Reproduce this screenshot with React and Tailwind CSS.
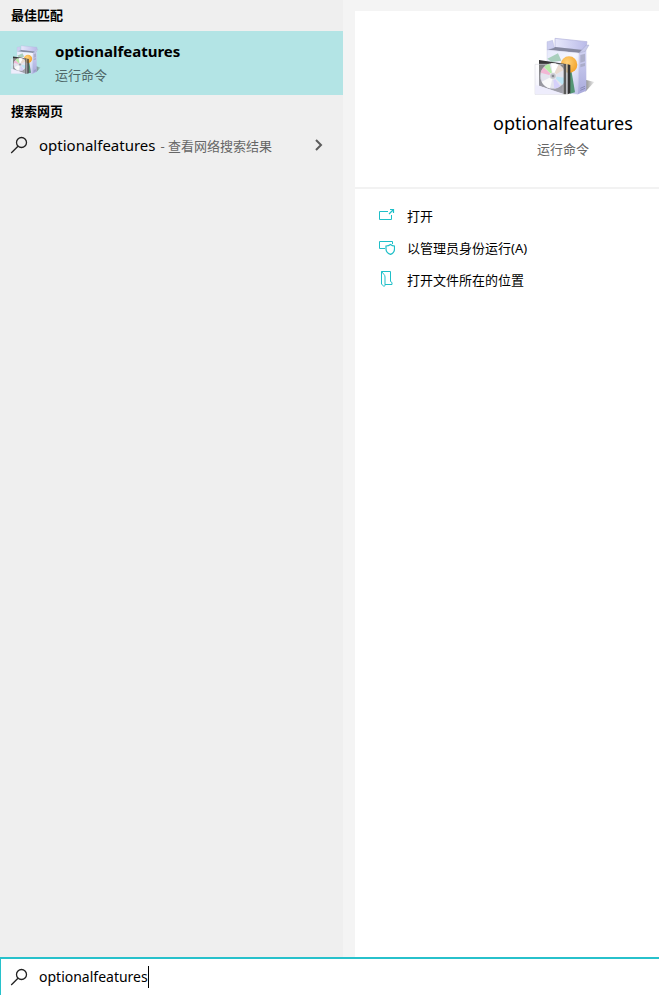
import { useState } from 'react'

const ACTIONS = [
  { label: '打开', Icon: OpenIcon },
  { label: '以管理员身份运行(A)', Icon: AdminIcon },
  { label: '打开文件所在的位置', Icon: LocationIcon },
]

function SearchIcon() {
  return (
    <svg className="size-5 shrink-0" viewBox="0 0 20 20" fill="none" stroke="#222" strokeWidth="1.3" aria-hidden="true">
      <circle cx="11.500" cy="7.500" r="5" />
      <path d="M8 11.200 1.200 18" />
    </svg>
  )
}

function OpenIcon() {
  return (
    <svg className="size-4" viewBox="0 0 16 16" fill="none" stroke="#1fbfc8" aria-hidden="true">
      <path d="M9 4.500H.5v8h12V8" />
      <path d="M10 7 14 3M11 2.500H14.500V6" strokeWidth="1.200" />
    </svg>
  )
}

function AdminIcon() {
  return (
    <svg className="size-4" viewBox="0 0 16 16" fill="none" stroke="#1fbfc8" aria-hidden="true">
      <path d="M6 9.500H.5v-7h13V5" />
      <path
        d="M11.500 5.500c1.200 1 2.500 1.500 4 1.500v3c0 2.500-1.600 4.400-4 5.400-2.800-1-4.500-2.900-4.500-5.400V7c1.600 0 3.300-.5 4.500-1.500Z"
        strokeWidth="1.200"
      />
    </svg>
  )
}

function LocationIcon() {
  return (
    <svg className="size-4" viewBox="0 0 16 16" fill="none" stroke="#1fbfc8" aria-hidden="true">
      <path d="M2.500.5h9v10l1.500 1v2H6" />
      <path d="M2.500.5v12.500l2.500 2.500q1-.5 1-2V6q0-1.500-1-2.500Z" />
    </svg>
  )
}

// Software box with a CD case in front of it
function AppIcon({ className }) {
  return (
    <svg className={className} viewBox="33 30 192 192" aria-hidden="true">
      <defs>
        <linearGradient id="front" x1="0" y1="0" x2="1" y2="1">
          <stop offset="0" stopColor="#e6e9fb" />
          <stop offset=".5" stopColor="#f6f7ff" />
          <stop offset="1" stopColor="#bfc2ea" />
        </linearGradient>
        <linearGradient id="side" x1="0" y1="0" x2="0" y2="1">
          <stop offset="0" stopColor="#d0d2f3" />
          <stop offset="1" stopColor="#a9aadb" />
        </linearGradient>
        <linearGradient id="lid" x1="0" y1="0" x2="1" y2="0">
          <stop offset="0" stopColor="#e7e8fb" />
          <stop offset="1" stopColor="#b9bae8" />
        </linearGradient>
        <linearGradient id="tray" x1="0" y1="0" x2="0" y2="1">
          <stop offset="0" stopColor="#303030" />
          <stop offset="1" stopColor="#8a8a8a" />
        </linearGradient>
        <linearGradient id="cover" x1="0" y1="0" x2="0" y2="1">
          <stop offset="0" stopColor="#fff" stopOpacity=".35" />
          <stop offset="1" stopColor="#d6d5f6" stopOpacity=".35" />
        </linearGradient>
        <linearGradient id="shadow" x1="0" y1="0" x2="1" y2="0">
          <stop offset="0" stopColor="#555" stopOpacity=".65" />
          <stop offset="1" stopColor="#555" stopOpacity=".1" />
        </linearGradient>
        <radialGradient id="orb" cx=".4" cy=".35" r=".7">
          <stop offset="0" stopColor="#ffd27a" />
          <stop offset="1" stopColor="#f3a126" />
        </radialGradient>
      </defs>
      <path d="M196 164 223 171 196 200Z" fill="url(#shadow)" />
      <path d="M105 40 201 50 196 76 105 68Z" fill="url(#lid)" stroke="#b0b1da" strokeWidth="2" />
      <path d="M81 74 105 66 196 76 177 84Z" fill="#85889f" />
      <path d="M81 50 98 46 103 68 81 75Z" fill="#cdcff0" stroke="#abadd6" />
      <path d="M81 75 177 84 174 208 81 196Z" fill="url(#front)" stroke="#c3c5e4" />
      <path d="M177 84 199 76 199 197 174 208Z" fill="url(#side)" />
      <path d="M199 60 207 60 196 79 177 84Z" fill="#c7c9ea" stroke="#9597bd" />
      <path d="M82 101 114 85 124 107 95 111Z" fill="#a9cfbd" />
      <path d="M148 118 152 124 165 202 150 206Z" fill="#549675" />
      <circle cx="147" cy="119" r="25" fill="url(#orb)" />
      <path d="M181 90 195 86V109L181 113ZM181 118 195 114V123L181 127Z" fill="#a1a4bd" opacity=".75" />
      <path d="M181 190 195 184M181 196 195 190" stroke="#7779a1" strokeWidth="2" />
      {/* CD case: tray, clear cover, disc, spine */}
      <path d="M57 105 132 116 132 207 57 182Z" fill="url(#tray)" />
      <path d="M45 118H130V208H45Z" fill="url(#cover)" stroke="#dcdce4" strokeWidth="2" />
      <path d="M46 180 57 182 128 207H46Z" fill="#eeedfc" />
      <circle cx="99" cy="153" r="38" fill="#e4e4ee" stroke="#c0c0ca" />
      <path d="M99 153 62 143A38 38 0 0 1 71 127Z" fill="#f2b7d4" />
      <path d="M99 153 72 126A38 38 0 0 1 88 116Z" fill="#b5eda5" />
      <path d="M99 153 93 115A38 38 0 0 1 115 119Z" fill="#fff" />
      <path d="M99 153 116 119A38 38 0 0 1 132 134Z" fill="#eadbd0" />
      <path d="M99 153 137 159A38 38 0 0 1 127 179Z" fill="#bde5f5" />
      <path d="M99 153 121 184A38 38 0 0 1 103 191Z" fill="#d5d0fa" />
      <path d="M99 153 90 190A38 38 0 0 1 65 170Z" fill="#fafafa" />
      <circle cx="99" cy="153" r="10" fill="#c4c5cc" stroke="#f5f5f5" strokeWidth="2" />
      <circle cx="99" cy="153" r="4" fill="#8b8b92" />
      <path d="M131 116 139 117V208H131Z" fill="#5a5a5a" />
      <path d="M139 117 143 118V208H139Z" fill="#c4c4c4" />
      <path d="M143 118 151 120V205L143 208Z" fill="#343434" />
    </svg>
  )
}

function SectionTitle({ children }) {
  return <h2 className="px-[11px] text-[13px] leading-8 font-bold">{children}</h2>
}

function ResultsPane() {
  return (
    <section className="w-[343px] shrink-0 bg-[#efefef]">
      <div className="-mt-px">
        <SectionTitle>最佳匹配</SectionTitle>
      </div>
      <button type="button" className="flex h-16 w-full items-start gap-[14px] bg-[#b3e4e5] px-[9px] text-left">
        <AppIcon className="mt-[13px] size-8" />
        <span className="flex flex-col pt-[10px]">
          <span className="text-[15px] leading-5 font-bold">optionalfeatures</span>
          <span className="pt-1 text-[13px] leading-5 text-[#4f6768]">运行命令</span>
        </span>
      </button>
      <SectionTitle>搜索网页</SectionTitle>
      <button type="button" className="flex h-9 w-full items-center gap-[9px] pr-[18px] pl-[10px] text-left">
        <SearchIcon />
        <span className="flex flex-1 items-baseline gap-[5px] text-[13px] text-[#666]">
          <span className="text-[15px] text-black">optionalfeatures</span>
          <span>- 查看网络搜索结果</span>
        </span>
        <svg className="h-3 w-3" viewBox="0 0 12 12" fill="none" stroke="#5c5c5c" strokeWidth="2" aria-hidden="true">
          <path d="M3 1l5 5-5 5" />
        </svg>
      </button>
    </section>
  )
}

function DetailPane() {
  return (
    <section className="min-w-[416px] flex-1 bg-white">
      <header className="flex flex-col items-center border-b-2 border-[#f2f2f2] pt-6 pb-[26px]">
        <AppIcon className="size-16" />
        <h1 className="pt-[10px] text-[18px] leading-7">optionalfeatures</h1>
        <p className="text-[13px] leading-6 text-[#666]">运行命令</p>
      </header>
      <ul className="pt-3">
        {ACTIONS.map(({ label, Icon }) => (
          <li key={label}>
            <button type="button" className="flex h-8 w-full items-center gap-3 pl-6 text-left text-[13px]">
              <span className="pb-1">
                <Icon />
              </span>
              {label}
            </button>
          </li>
        ))}
      </ul>
    </section>
  )
}

function SearchBar() {
  const [query, setQuery] = useState('optionalfeatures')

  return (
    <label className="flex h-[38px] items-center gap-[9px] border-t-2 border-l border-[#27c1cb] bg-white pl-[9px]">
      <SearchIcon />
      <span className="flex items-center">
        <input
          type="text"
          aria-label="搜索"
          value={query}
          onChange={(e) => setQuery(e.target.value)}
          className="field-sizing-content text-[14px] leading-6 caret-transparent outline-none"
        />
        <span className="h-[22px] w-px bg-black" />
      </span>
    </label>
  )
}

export default function App() {
  return (
    <div className="flex min-h-screen flex-col overflow-hidden bg-[#f4f4f4] font-['Noto_Sans','Noto_Sans_CJK_SC',sans-serif] text-black">
      <main className="flex flex-1 gap-3">
        <ResultsPane />
        <div className="flex flex-1 pt-[11px]">
          <DetailPane />
        </div>
      </main>
      <SearchBar />
    </div>
  )
}
